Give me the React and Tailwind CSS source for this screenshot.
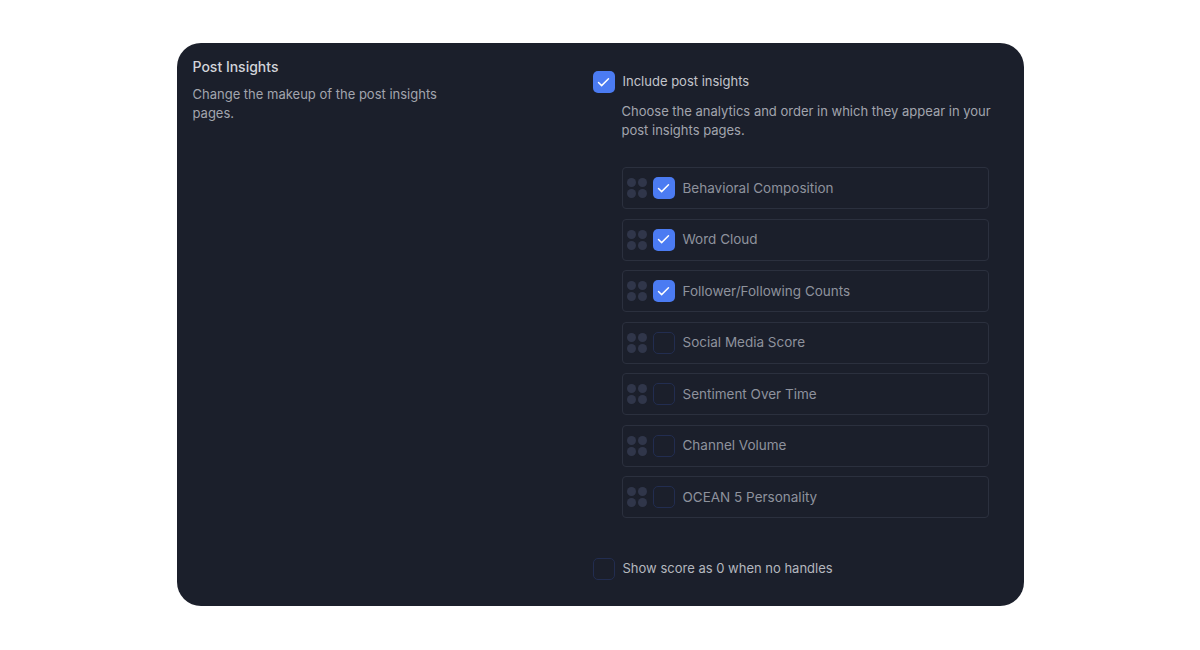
import { Check } from 'lucide-react';

const items = [
  { label: 'Behavioral Composition', on: true },
  { label: 'Word Cloud', on: true },
  { label: 'Follower/Following Counts', on: true },
  { label: 'Social Media Score', on: false },
  { label: 'Sentiment Over Time', on: false },
  { label: 'Channel Volume', on: false },
  { label: 'OCEAN 5 Personality', on: false },
];

function Box({ on }) {
  return on ? (
    <span className="w-[22px] h-[22px] rounded-[5px] bg-[#4b7bf2] flex items-center justify-center shrink-0">
      <Check size={15} strokeWidth={2.3} className="text-white" />
    </span>
  ) : (
    <span className="w-[22px] h-[22px] rounded-[5px] border border-[#222d50] shrink-0" />
  );
}

function Grip() {
  return (
    <div className="grid grid-cols-2 gap-[2px] w-[20px] shrink-0">
      {[0, 1, 2, 3].map(i => (
        <span key={i} className="w-[9px] h-[9px] rounded-full bg-[#30364a]" />
      ))}
    </div>
  );
}

export default function App() {
  return (
    <div className="min-h-[650px] bg-white pt-[43px]" style={{ fontFamily: 'Inter, "Noto Sans", sans-serif' }}>
      <div className="mx-auto w-[847px] h-[563px] rounded-[24px] bg-[#1b1f2b] flex pl-4 pt-[14px] pr-[35px]">
        {/* Left */}
        <div className="w-[400px] shrink-0">
          <h2 className="text-[14px] leading-5 font-medium text-[#d2d4da]">Post Insights</h2>
          <p className="mt-[8px] w-[260px] text-[13px] leading-[19px] text-[#a2a5ae]">
            Change the makeup of the post insights pages.
          </p>
        </div>

        {/* Right */}
        <div className="flex-1 pt-[14px]">
          <label className="flex items-center gap-2">
            <Box on />
            <span className="text-[13px] text-[#c3c5cc]">Include post insights</span>
          </label>
          <p className="mt-[9px] pl-[29px] -mr-[19px] text-[13px] leading-[19px] text-[#a2a5ae]">
            Choose the analytics and order in which they appear in your post insights pages.
          </p>

          <div className="mt-[27px] ml-[29px] flex flex-col gap-[9.5px]">
            {items.map(it => (
              <div key={it.label}
                className="h-[42px] rounded-[4px] border border-[#2b303e] flex items-center pl-[4px] gap-[6px]">
                <Grip />
                <Box on={it.on} />
                <span className="ml-[2px] text-[13.5px] text-[#8e929d]">{it.label}</span>
              </div>
            ))}
          </div>

          <label className="mt-[40px] flex items-center gap-2">
            <Box on={false} />
            <span className="text-[13px] text-[#b4b7bf]">Show score as 0 when no handles</span>
          </label>
        </div>
      </div>
    </div>
  );
}
